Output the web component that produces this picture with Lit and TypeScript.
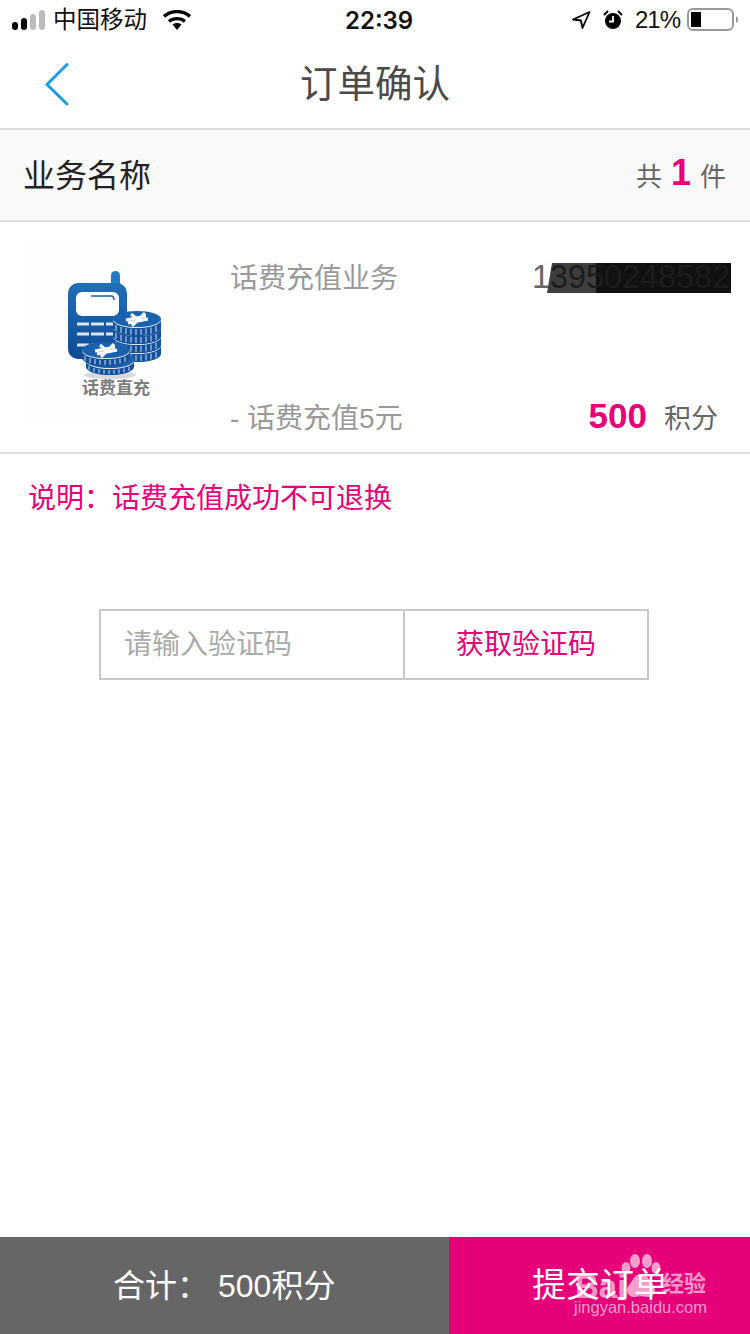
import { LitElement, html, css, svg } from "lit";
import { customElement } from "lit/decorators.js";

const coin = (cx: number, cy: number, rx: number, ry: number, h: number) => {
  const ribs = [];
  for (let i = -rx + 3; i < rx; i += 5) {
    const yo = ry * Math.sqrt(1 - (i * i) / (rx * rx));
    ribs.push(svg`<line x1=${cx + i} x2=${cx + i} y1=${cy + yo + 1} y2=${cy + yo + h - 1} stroke="#cfdff0" stroke-width="1"/>`);
  }
  return svg`
    <path d="M${cx - rx} ${cy}v${h}a${rx} ${ry} 0 0 0 ${rx * 2} 0v${-h}z" fill="#14509c"/>
    ${ribs}
    <ellipse cx=${cx} cy=${cy} rx=${rx} ry=${ry} fill="#dfe9f5"/>
    <ellipse cx=${cx} cy=${cy - 1} rx=${rx} ry=${ry} fill="#1a62ad"/>
  `;
};

const yuan = (cx: number, cy: number) => svg`
  <path d="M${cx - 11} ${cy + 1}L${cx + 9} ${cy - 3}M${cx - 9} ${cy + 4}L${cx + 11} ${cy}M${cx - 5} ${cy + 7}L${cx + 1} ${cy + 1}L${cx + 8} ${cy - 6}M${cx - 6} ${cy - 5}L${cx} ${cy}" stroke="#fff" stroke-width="3" fill="none"/>
`;

@customElement("app-root")
export class AppRoot extends LitElement {
  static styles = css`
    :host {
      display: flex;
      flex-direction: column;
      width: 750px;
      height: 1334px;
      overflow: hidden;
      background: #fff;
      font-family: "Liberation Sans", "Noto Sans CJK SC", sans-serif;
      color: #333;
    }
    .status {
      height: 40px;
      display: flex;
      align-items: center;
      padding: 0 11px 0 12px;
      color: #111;
      font-size: 23.5px;
      position: relative;
    }
    .signal { display: block; margin-right: 7px; }
    .carrier { padding-bottom: 4px; margin-left: -1px; }
    .wifi { display: block; margin-left: 16px; margin-bottom: 1px; }
    .time {
      position: absolute;
      left: 345px;
      top: 7px;
      font-family: Inter, sans-serif;
      font-weight: 600;
      font-size: 24px;
      line-height: 28px;
    }
    .status-right {
      margin-left: auto;
      display: flex;
      align-items: center;
    }
    .alarm { margin-left: 12px; }
    .pct {
      font-size: 24px;
      letter-spacing: -1px;
      width: 45px;
      margin: 0 7px 0 12px;
      font-family: "Liberation Sans", sans-serif;
    }
    .nav {
      height: 88px;
      box-sizing: content-box;
      border-bottom: 2px solid #ddd;
      display: flex;
      align-items: center;
      justify-content: center;
      position: relative;
      font-size: 37.5px;
      color: #4a4a4a;
    }
    .nav-title { padding-bottom: 8px; }
    .back { position: absolute; left: 44px; top: 22px; }
    .head {
      height: 90px;
      background: #f9f9f9;
      border-bottom: 2px solid #ddd;
      display: flex;
      align-items: center;
      justify-content: space-between;
      padding: 0 24px;
      font-size: 32px;
      color: #222;
    }
    .head-name { padding-bottom: 4px; margin-left: -1px; }
    .count { font-size: 26px; color: #666; display: flex; align-items: center; gap: 9px; padding-bottom: 2px; }
    .count b { font-size: 36px; color: #e6007a; line-height: 36px; margin-bottom: 2px; }
    .item {
      height: 230px;
      border-bottom: 2px solid #ddd;
      display: flex;
      padding: 0 0 0 24px;
    }
    .thumb { display: block; margin-top: 23px; }
    .info {
      flex: 1;
      padding: 36px 32px 18px 30px;
      display: flex;
      flex-direction: column;
      justify-content: space-between;
      font-size: 28px;
      color: #999;
      position: relative;
    }
    .row { display: flex; justify-content: space-between; align-items: center; height: 36px; }
    .phone {
      position: absolute;
      left: 332px;
      top: 36px;
      font-size: 32.4px;
      line-height: 38px;
      color: #666;
      white-space: nowrap;
    }
    .mask {
      position: absolute;
      left: 347px;
      top: 41px;
      width: 184px;
      height: 30px;
      background: linear-gradient(90deg, #3d3d3d 0, #3d3d3d 49px, #101010 49px, #101010 100%);
      clip-path: polygon(5px 0, 100% 0, 100% 100%, 0 100%);
    }
    .mask span {
      position: absolute;
      left: 3px;
      top: -5px;
      font-size: 32.4px;
      line-height: 38px;
      color: #1c1c1c;
      white-space: nowrap;
    }
    .price { display: flex; align-items: center; color: #666; font-size: 27px; gap: 17px; }
    .price b { font-size: 35px; color: #e6007a; }
    .note {
      padding: 25px 0 0 28px;
      font-size: 28px;
      line-height: 40px;
      color: #e6007a;
    }
    .form {
      margin: 90px 0 0 99px;
      width: 550px;
      height: 71px;
      box-sizing: border-box;
      border: 2px solid #c8c8c8;
      display: flex;
      font-size: 28px;
    }
    .ph {
      width: 304px;
      box-sizing: border-box;
      border-right: 2px solid #c8c8c8;
      padding: 0 0 6px 23px;
      display: flex;
      align-items: center;
      color: #aaa;
    }
    .get {
      flex: 1;
      display: flex;
      align-items: center;
      justify-content: center;
      padding-bottom: 6px;
      color: #e6007a;
    }
    .spacer { flex: 1; }
    .foot { height: 97px; display: flex; color: #fff; }
    .total {
      width: 449px;
      background: #666;
      display: flex;
      align-items: center;
      padding: 0 0 6px 113px;
      box-sizing: border-box;
      font-size: 32px;
      gap: 9px;
    }
    .submit {
      flex: 1;
      background: #e6007a;
      position: relative;
      font-size: 34px;
      display: flex;
      align-items: center;
      padding: 0 0 6px 83px;
    }
    .wm { position: absolute; left: 0; top: 0; pointer-events: none; color: rgba(255,255,255,.62); }
    .wm-bai { position: absolute; left: 126px; top: 31px; font-size: 33px; font-weight: 700; line-height: 38px; }
    .wm-jy { position: absolute; left: 213px; top: 31px; font-size: 22px; font-weight: 700; line-height: 32px; white-space: nowrap; }
    .wm-url { position: absolute; left: 125px; top: 59px; font-size: 16.5px; line-height: 22px; white-space: nowrap; }
    .paw { position: absolute; left: 172px; top: 17px; }
    .lbl { position: relative; z-index: 1; }
  `;

  render() {
    return html`
      <div class="status">
        <svg class="signal" width="35" height="20" viewBox="0 0 35 20">
          <rect x="0" y="12" width="6" height="8" rx="3" fill="#000"/>
          <rect x="9" y="8" width="6" height="12" rx="3" fill="#000"/>
          <rect x="18" y="4" width="6" height="16" rx="3" fill="#bbb"/>
          <rect x="27" y="0" width="6" height="20" rx="3" fill="#bbb"/>
        </svg>
        <span class="carrier">中国移动</span>
        <svg class="wifi" width="28" height="20" viewBox="0 0 28 20">
          <path d="M1 6.500C8.500 0 19.500 0 27 6.500" stroke="#000" stroke-width="3.400" fill="none"/>
          <path d="M6 11.500C10.500 7.700 17.500 7.700 22 11.500" stroke="#000" stroke-width="3.400" fill="none"/>
          <path d="M9.500 14.500C12 12.500 16 12.500 18.500 14.500L14 20z" fill="#000"/>
        </svg>
        <span class="time">22:39</span>
        <div class="status-right">
          <svg width="20" height="20" viewBox="0 0 20 20"><path d="M18.500 2 L2 9.500 L10 10.500 L11.500 18 Z" fill="none" stroke="#000" stroke-width="1.800" stroke-linejoin="round"/></svg>
          <svg class="alarm" width="20" height="20" viewBox="0 0 20 20">
            <circle cx="10" cy="11" r="8" fill="#000"/>
            <path d="M10 6v5.500H6" stroke="#fff" stroke-width="1.800" fill="none"/>
            <path d="M1 5L5 1M15 1L19 5" stroke="#000" stroke-width="2"/>
          </svg>
          <span class="pct">21%</span>
          <svg width="52" height="24" viewBox="0 0 52 24">
            <rect x="1" y="1" width="45" height="21" rx="5" fill="none" stroke="#999" stroke-width="2"/>
            <rect x="4" y="4" width="10" height="15" fill="#000"/>
            <path d="M49 8a4 4 0 0 1 0 7z" fill="#999"/>
          </svg>
        </div>
      </div>
      <div class="nav">
        <svg class="back" width="26" height="44" viewBox="0 0 26 44">
          <path d="M23 2.500L3 22.500L23 42" stroke="#1a9be8" stroke-width="3" fill="none" stroke-linecap="round" stroke-linejoin="round"/>
        </svg>
        <span class="nav-title">订单确认</span>
      </div>
      <div class="head">
        <span class="head-name">业务名称</span>
        <span class="count">共 <b>1</b> 件</span>
      </div>
      <div class="item">
        <svg class="thumb" width="176" height="180" viewBox="24 245 176 180">
          <defs>
            <linearGradient id="body" x1="0" y1="0" x2="0" y2="1">
              <stop offset="0" stop-color="#1f6fb8"/>
              <stop offset="1" stop-color="#0f4a94"/>
            </linearGradient>
          </defs>
          <rect x="24" y="245" width="176" height="180" fill="#fefefe"/>
          <rect x="111" y="271" width="9" height="26" rx="4.500" fill="#2379c4"/>
          <rect x="68" y="283" width="59" height="76" rx="10" fill="url(#body)"/>
          <rect x="76" y="292" width="43" height="24" rx="6" fill="#fff"/>
          <path d="M91 296h20q3 0 3 4" stroke="#1a5ea8" stroke-width="1.500" fill="none"/>
          <path d="M77 324h12M91 324h13M106 324h10M77 334h12M91 334h13M106 334h10M77 345h12M91 345h13" stroke="#dbe4ef" stroke-width="3"/>
          ${coin(137, 346, 24, 8, 8)}
          ${coin(137, 337, 24, 8, 8)}
          ${coin(137, 328, 24, 8, 8)}
          ${coin(137, 320, 24, 8, 8)}
          ${yuan(137, 319)}
          <ellipse cx="110" cy="375" rx="26" ry="4" fill="#d8d8d8"/>
          ${coin(110, 361, 24, 8, 6)}
          ${coin(106, 351, 24, 8, 7)}
          ${yuan(106, 350)}
          <text x="82" y="394" font-size="17" font-weight="700" fill="#7d7d7d" font-family="'Noto Sans CJK SC', sans-serif">话费直充</text>
        </svg>
        <div class="info">
          <div class="row"><span>话费充值业务</span></div>
          <span class="phone">13950248582</span>
          <div class="mask"><span>3950248582</span></div>
          <div class="row">
            <span>- 话费充值5元</span>
            <span class="price"><b>500</b>积分</span>
          </div>
        </div>
      </div>
      <div class="note">说明：话费充值成功不可退换</div>
      <div class="form">
        <div class="ph">请输入验证码</div>
        <div class="get">获取验证码</div>
      </div>
      <div class="spacer"></div>
      <div class="foot">
        <div class="total"><span>合计：</span><span>500积分</span></div>
        <div class="submit">
          <div class="wm">
            <svg class="paw" width="40" height="46" viewBox="0 0 40 46" fill="currentColor">
              <ellipse cx="5" cy="14" rx="4.500" ry="6"/>
              <ellipse cx="14" cy="7" rx="5" ry="7"/>
              <ellipse cx="26" cy="7" rx="5" ry="7"/>
              <ellipse cx="35" cy="14" rx="4.500" ry="6"/>
              <path d="M20 20C13 20 12 27 8 31C3 37 8 44 14 43C18 42 22 42 26 43C32 44 37 37 32 31C28 27 27 20 20 20Z"/>
            </svg>
            <span class="wm-bai">Bai</span>
            <span class="wm-jy">经验</span>
            <span class="wm-url">jingyan.baidu.com</span>
          </div>
          <span class="lbl">提交订单</span>
        </div>
      </div>
    `;
  }
}
